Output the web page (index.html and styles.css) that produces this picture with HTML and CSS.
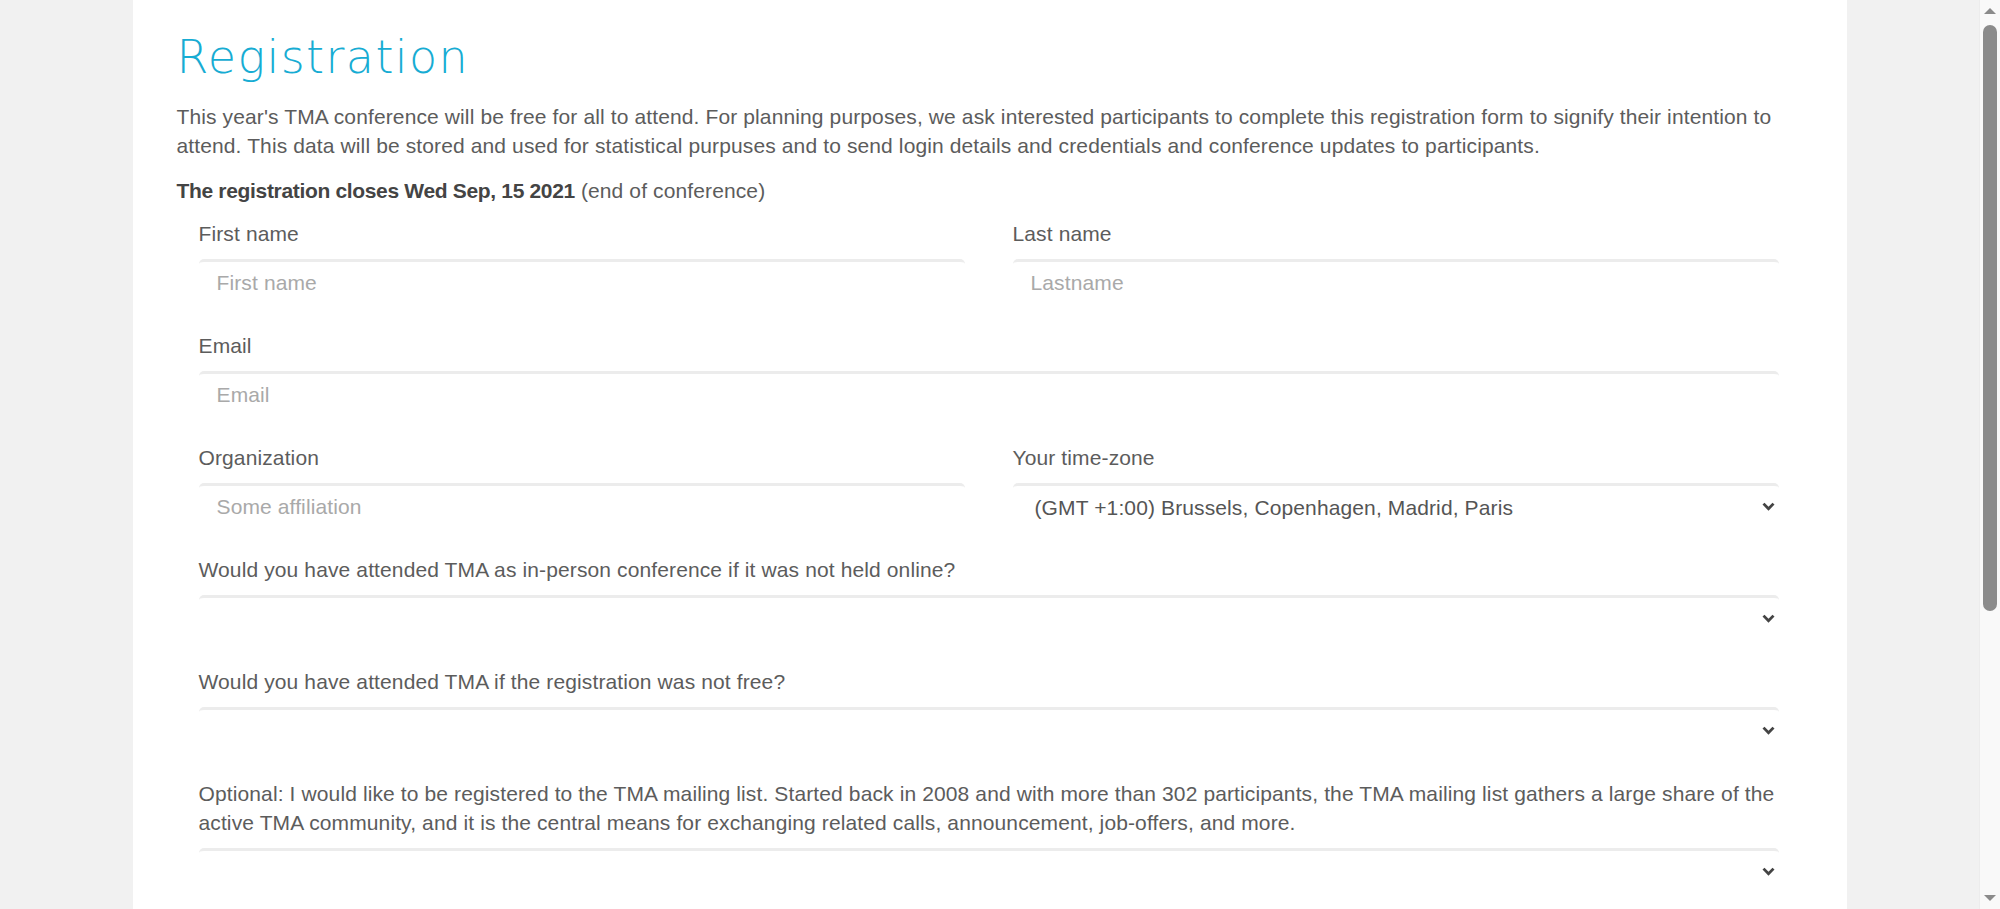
FILE: index.html
```html
<!DOCTYPE html>
<html lang="en">
<head>
<meta charset="utf-8">
<title>Registration</title>
<link rel="stylesheet" href="styles.css">
</head>
<body>
<div class="page">
  <h1 class="title">Registration</h1>
  <p class="intro">This year's TMA conference will be free for all to attend. For planning purposes, we ask interested participants to complete this registration form to signify their intention to attend. This data will be stored and used for statistical purpuses and to send login details and credentials and conference updates to participants.</p>
  <p class="closing"><strong>The registration closes Wed Sep, 15 2021</strong> (end of conference)</p>

  <form class="reg-form">
    <div class="row">
      <div class="field">
        <label class="label" for="fn">First name</label>
        <input class="control" id="fn" type="text" placeholder="First name">
      </div>
      <div class="field">
        <label class="label" for="ln">Last name</label>
        <input class="control" id="ln" type="text" placeholder="Lastname">
      </div>
    </div>

    <div class="field">
      <label class="label" for="em">Email</label>
      <input class="control" id="em" type="email" placeholder="Email">
    </div>

    <div class="row">
      <div class="field">
        <label class="label" for="org">Organization</label>
        <input class="control" id="org" type="text" placeholder="Some affiliation">
      </div>
      <div class="field">
        <label class="label" for="tz">Your time-zone</label>
        <div class="select-wrap">
          <select class="control select" id="tz">
            <option>(GMT +0:00) London, Lisbon, Casablanca</option>
            <option selected>(GMT +1:00) Brussels, Copenhagen, Madrid, Paris</option>
            <option>(GMT +2:00) Kaliningrad, South Africa</option>
          </select>
          <svg class="chev" width="13" height="9" viewBox="0 0 13 9"><polyline points="1.5,1.6 6.5,6.8 11.5,1.6" fill="none" stroke="#444" stroke-width="2.8"/></svg>
        </div>
      </div>
    </div>

    <div class="field">
      <label class="label" for="q1">Would you have attended TMA as in-person conference if it was not held online?</label>
      <div class="select-wrap">
        <select class="control select" id="q1">
          <option selected></option>
          <option>Yes</option>
          <option>No</option>
        </select>
        <svg class="chev" width="13" height="9" viewBox="0 0 13 9"><polyline points="1.5,1.6 6.5,6.8 11.5,1.6" fill="none" stroke="#444" stroke-width="2.8"/></svg>
      </div>
    </div>

    <div class="field">
      <label class="label" for="q2">Would you have attended TMA if the registration was not free?</label>
      <div class="select-wrap">
        <select class="control select" id="q2">
          <option selected></option>
          <option>Yes</option>
          <option>No</option>
        </select>
        <svg class="chev" width="13" height="9" viewBox="0 0 13 9"><polyline points="1.5,1.6 6.5,6.8 11.5,1.6" fill="none" stroke="#444" stroke-width="2.8"/></svg>
      </div>
    </div>

    <div class="field">
      <label class="label" for="q3">Optional: I would like to be registered to the TMA mailing list. Started back in 2008 and with more than 302 participants, the TMA mailing list gathers a large share of the active TMA community, and it is the central means for exchanging related calls, announcement, job-offers, and more.</label>
      <div class="select-wrap">
        <select class="control select" id="q3">
          <option selected></option>
          <option>Yes</option>
          <option>No</option>
        </select>
        <svg class="chev" width="13" height="9" viewBox="0 0 13 9"><polyline points="1.5,1.6 6.5,6.8 11.5,1.6" fill="none" stroke="#444" stroke-width="2.8"/></svg>
      </div>
    </div>
  </form>
</div>

<div class="scrollbar" aria-hidden="true">
  <div class="sb-arrow sb-up"></div>
  <div class="sb-thumb"></div>
  <div class="sb-arrow sb-down"></div>
</div>
</body>
</html>
```

FILE: styles.css
```css
html, body {
  padding: 0;
}

html {
  margin: 0;
}

body {
  margin: 0 21px 0 0;
  background: #f1f1f1;
  font-family: "Liberation Sans", Arial, sans-serif;
  font-size: 21px;
  line-height: 29px;
  letter-spacing: 0.12px;
  color: #5c5c5c;
  overflow: hidden;
}

.page {
  box-sizing: border-box;
  width: 1714px;
  min-height: 909px;
  margin: 0 auto;
  padding: 31px 44px 40px;
  background: #fff;
}

.title {
  margin: 0;
  font-family: "DejaVu Sans", sans-serif;
  font-weight: 200;
  font-size: 46px;
  line-height: 52px;
  letter-spacing: 1.4px;
  color: #17acd3;
}

.intro {
  margin: 19px 0 16px;
}

.closing {
  margin: 0 0 14px;
}

.closing strong {
  color: #444;
  letter-spacing: -0.33px;
}

.reg-form {
  margin: 0 24px 0 22px;
}

.row {
  display: grid;
  grid-template-columns: 1fr 1fr;
  column-gap: 48px;
}

.field {
  margin-bottom: 24px;
}

.label {
  display: block;
  margin-bottom: 11px;
}

.control {
  box-sizing: border-box;
  display: block;
  width: 100%;
  height: 48px;
  margin: 0;
  padding: 0 18px 3px;
  border: none;
  border-top: 3px solid #ececec;
  border-radius: 5px;
  background: #fff;
  font-family: inherit;
  font-size: 21px;
  letter-spacing: 0.12px;
  color: #555;
  outline: none;
}

.control::placeholder {
  color: #a9a9a9;
}

.select-wrap {
  position: relative;
}

.select {
  -webkit-appearance: none;
  appearance: none;
  padding-left: 22px;
  padding-right: 40px;
}

.chev {
  position: absolute;
  right: 4px;
  top: 50%;
  margin-top: -5px;
  pointer-events: none;
}

/* browser scrollbar as seen in the screenshot */
.scrollbar {
  position: fixed;
  top: 0;
  right: 0;
  width: 21px;
  height: 100vh;
  background: #f9f9f9;
  border-left: 1px solid #ececec;
  box-sizing: border-box;
}

.sb-thumb {
  position: absolute;
  top: 25px;
  left: 3px;
  width: 14px;
  height: 586px;
  border-radius: 7px;
  background: #8b8b8b;
}

.sb-arrow {
  position: absolute;
  left: 4px;
  width: 0;
  height: 0;
  border-left: 6px solid transparent;
  border-right: 6px solid transparent;
}

.sb-up {
  top: 8px;
  border-bottom: 6px solid #8b8b8b;
}

.sb-down {
  bottom: 8px;
  border-top: 6px solid #8b8b8b;
}
```
